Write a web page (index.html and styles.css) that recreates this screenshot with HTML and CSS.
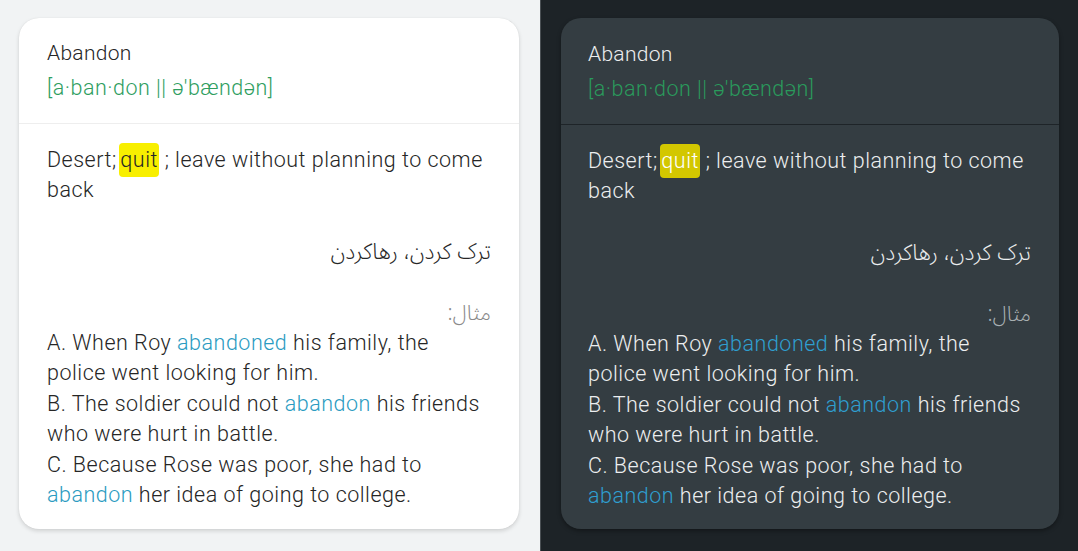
FILE: index.html
```html
<!DOCTYPE html>
<html lang="en">
<head>
<meta charset="utf-8">
<title>Abandon</title>
<link rel="stylesheet" href="styles.css">
</head>
<body>
<div class="screen">
  <section class="panel panel-light">
    <article class="card">
      <header class="card-head">
        <div class="word">Abandon</div>
        <div class="phonetic">[a·ban·don || ə'bændən]</div>
      </header>
      <div class="card-body">
        <p class="def">Desert; <mark class="hl">quit</mark> ; leave without planning to come back</p>
        <p class="fa" dir="rtl">ترک کردن، رهاکردن</p>
        <p class="label" dir="rtl">مثال:</p>
        <p class="examples">A. When Roy <span class="kw">abandoned</span> his family, the police went looking for him.<br>B. The soldier could not <span class="kw">abandon</span> his friends who were hurt in battle.<br>C. Because Rose was poor, she had to <span class="kw">abandon</span> her idea of going to college.</p>
      </div>
    </article>
  </section>
  <section class="panel panel-dark">
    <article class="card">
      <header class="card-head">
        <div class="word">Abandon</div>
        <div class="phonetic">[a·ban·don || ə'bændən]</div>
      </header>
      <div class="card-body">
        <p class="def">Desert; <mark class="hl">quit</mark> ; leave without planning to come back</p>
        <p class="fa" dir="rtl">ترک کردن، رهاکردن</p>
        <p class="label" dir="rtl">مثال:</p>
        <p class="examples">A. When Roy <span class="kw">abandoned</span> his family, the police went looking for him.<br>B. The soldier could not <span class="kw">abandon</span> his friends who were hurt in battle.<br>C. Because Rose was poor, she had to <span class="kw">abandon</span> her idea of going to college.</p>
      </div>
    </article>
  </section>
</div>
</body>
</html>
```

FILE: styles.css
```css
* { box-sizing: border-box; }
html, body { margin: 0; padding: 0; }
body {
  width: 1078px;
  height: 551px;
  overflow: hidden;
  font-family: "Roboto Light", Roboto, "DejaVu Sans", sans-serif;
  font-weight: 300;
}
.screen {
  display: flex;
  height: 551px;
}
.panel {
  height: 551px;
  padding: 18px 21px 22px 19px;
}
.panel-light {
  width: 540px;
  background: #f1f3f4;
}
.panel-dark {
  width: 538px;
  background: #1d2327;
  border-left: 1px solid #4a5054;
  padding-left: 20px;
  padding-right: 19px;
}
.card {
  height: 511px;
  border-radius: 20px;
  overflow: hidden;
}
.panel-light .card {
  background: #ffffff;
  box-shadow: 0 2px 4px rgba(0,0,0,0.14), 0 0 1px rgba(0,0,0,0.10);
  color: #262626;
}
.panel-dark .card {
  background: #343d42;
  box-shadow: 0 2px 4px rgba(0,0,0,0.35);
  color: #eceeef;
}
.card-head {
  padding: 20px 28px 20px;
}
.panel-light .card-head { border-bottom: 1px solid #eeeeee; }
.panel-dark .card-head { border-bottom: 1px solid #1e2428; padding-top: 21px; padding-left: 27px; }
.word {
  font-size: 21px;
  line-height: 30px;
  letter-spacing: 0.3px;
}
.phonetic {
  margin-top: 5px;
  font-size: 21.5px;
  line-height: 30px;
  letter-spacing: 0.5px;
  color: #2f9e5f;
}
.panel-dark .phonetic { color: #2a9a5c; }
.card-body {
  padding: 21px 28px 0 28px;
  font-size: 21.5px;
  letter-spacing: 0.5px;
}
.panel-dark .card-body { padding-left: 27px; }
.card-body p { margin: 0; }
.card-body .def { line-height: 30px; }
.hl {
  background: #f8ef00;
  color: inherit;
  border-radius: 4px;
  padding: 4px 1px 5px;
  margin-left: -3px;
}
.panel-dark .hl { background: #d3c700; color: #ffffff; }
.card-body .fa {
  margin-top: 32px;
  line-height: 30px;
  font-family: "Noto Sans Arabic", "DejaVu Sans", sans-serif;
  font-weight: 300;
  font-size: 22px;
  letter-spacing: 0;
}
.card-body .label {
  margin-top: 31px;
  line-height: 30px;
  font-family: "Noto Sans Arabic", "DejaVu Sans", sans-serif;
  font-weight: 300;
  font-size: 21px;
  letter-spacing: 0;
  color: #8a8a8a;
}
.panel-dark .card-body .label { color: #a9b0b3; }
.card-body .examples { line-height: 30.4px; }
.kw { color: #2b9bc1; }
.panel-dark .kw { color: #2f9fd0; }
```
